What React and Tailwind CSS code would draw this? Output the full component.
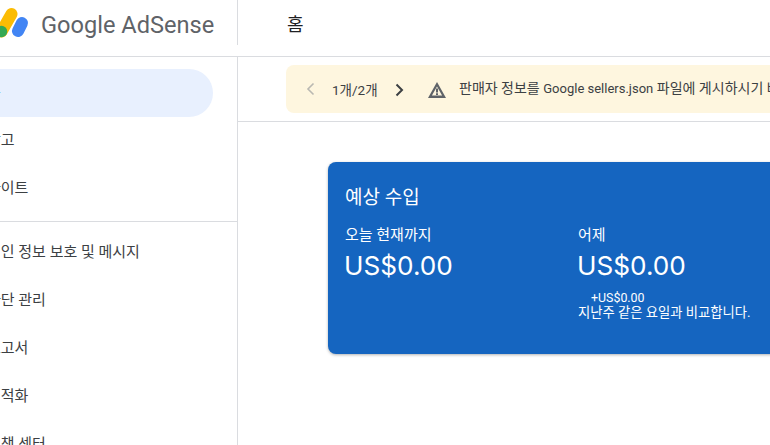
const sans = { fontFamily: '"Roboto", "Noto Sans CJK KR", sans-serif' };
const money = { fontFamily: '"Inter", sans-serif' };

function Logo() {
  return (
    <svg width="40" height="45" viewBox="0 0 40 45" className="shrink-0" fill="none" strokeLinecap="round" strokeWidth="12">
      <path d="M11.5 14 1.5 31.5" stroke="#fbbc04" />
      <path d="M22 23 18 31" stroke="#4285f4" />
      <circle cx="1.5" cy="31.5" r="5.7" fill="#34a853" />
    </svg>
  );
}

function NavItem({ label, active }) {
  return (
    <div className={`h-12 w-[213px] flex items-center rounded-r-full whitespace-nowrap text-[15px] ${active ? 'bg-[#e8f0fe] text-[#1a73e8]' : 'text-[#3c4043]'}`}>
      <span className="-ml-[13px] relative -top-[1px]">{label}</span>
    </div>
  );
}

export default function App() {
  return (
    <div className="w-[770px] h-[445px] overflow-hidden bg-white flex flex-col" style={sans}>
      <header className="h-[57px] shrink-0 flex border-b border-[#dadce0]">
        <div className="w-[238px] h-[45px] shrink-0 flex items-center border-r border-[#dadce0]">
          <Logo />
          <span className="ml-[1px] pt-[6px] text-[23.6px] leading-none text-[#5f6368] whitespace-nowrap">Google AdSense</span>
        </div>
        <div className="pl-[49px] h-[48px] flex items-center text-[18px] text-[#202124]">홈</div>
      </header>
      <div className="flex flex-1 min-h-0">
        <aside className="w-[238px] shrink-0 border-r border-[#dadce0] pt-3 overflow-hidden">
          <NavItem label="홈" active />
          <NavItem label="광고" />
          <NavItem label="사이트" />
          <div className="mt-2 mb-[7px] border-t border-[#dadce0]" />
          <NavItem label="개인 정보 보호 및 메시지" />
          <NavItem label="차단 관리" />
          <NavItem label="보고서" />
          <NavItem label="최적화" />
          <NavItem label="정책 센터" />
        </aside>
        <main className="flex-1 min-w-0 overflow-hidden">
          <div className="h-[65px] border-b border-[#dadce0] pt-2 pl-12">
            <div className="h-12 w-[700px] rounded-lg bg-[#fef6df] flex items-center whitespace-nowrap text-[14px] text-[#3c4043]">
              <svg width="24" height="24" viewBox="0 0 24 24" className="ml-[13px] shrink-0" fill="none" stroke="#b9b8b2" strokeWidth="1.6"><path d="M14.5 6.5 9 12l5.5 5.5" /></svg>
              <span className="ml-[9px] w-[55px] text-[13.5px] relative top-[1px]">1개/2개</span>
              <svg width="24" height="24" viewBox="0 0 24 24" className="shrink-0 relative top-[1px]" fill="none" stroke="#3c4043" strokeWidth="2"><path d="M9.5 6.5 15 12l-5.5 5.5" /></svg>
              <svg width="18" height="16" viewBox="0 0 18 16" className="ml-[17px] shrink-0 relative top-[1px]" fill="#5f6368"><path fillRule="evenodd" d="M9 0 18 16H0L9 0zm0 4.4L3.9 13.6h10.2L9 4.4z" /><path d="M8 6.5h2v4H8zM8 11.3h2v1.7H8z" /></svg>
              <span className="ml-[13px] relative -top-[1px]">판매자 정보를 <span className="text-[13px]">Google sellers.json</span> 파일에 게시하시기 바랍니다.</span>
            </div>
          </div>
          <div className="pl-[90px] pt-10">
            <div className="w-[700px] h-[192px] rounded-lg bg-[#1565c0] shadow-[0_1px_3px_rgba(60,64,67,0.4)] text-white pt-[24px] pl-[17px]">
              <div className="text-[19px] leading-6">예상 수입</div>
              <div className="flex mt-[15px]">
                <div className="w-[233px]">
                  <div className="text-[15px] leading-5">오늘 현재까지</div>
                  <div className="text-[26.2px] leading-9 mt-[3px] -ml-[1px]" style={money}>US$0.00</div>
                </div>
                <div>
                  <div className="text-[15px] leading-5">어제</div>
                  <div className="text-[26.2px] leading-9 mt-[3px] -ml-[1px]" style={money}>US$0.00</div>
                  <div className="text-[12.4px] leading-4 pl-[13px] mt-[6px]">+US$0.00</div>
                  <div className="text-[13.3px] leading-4 -mt-[1px]">지난주 같은 요일과 비교합니다.</div>
                </div>
              </div>
            </div>
          </div>
        </main>
      </div>
    </div>
  );
}
